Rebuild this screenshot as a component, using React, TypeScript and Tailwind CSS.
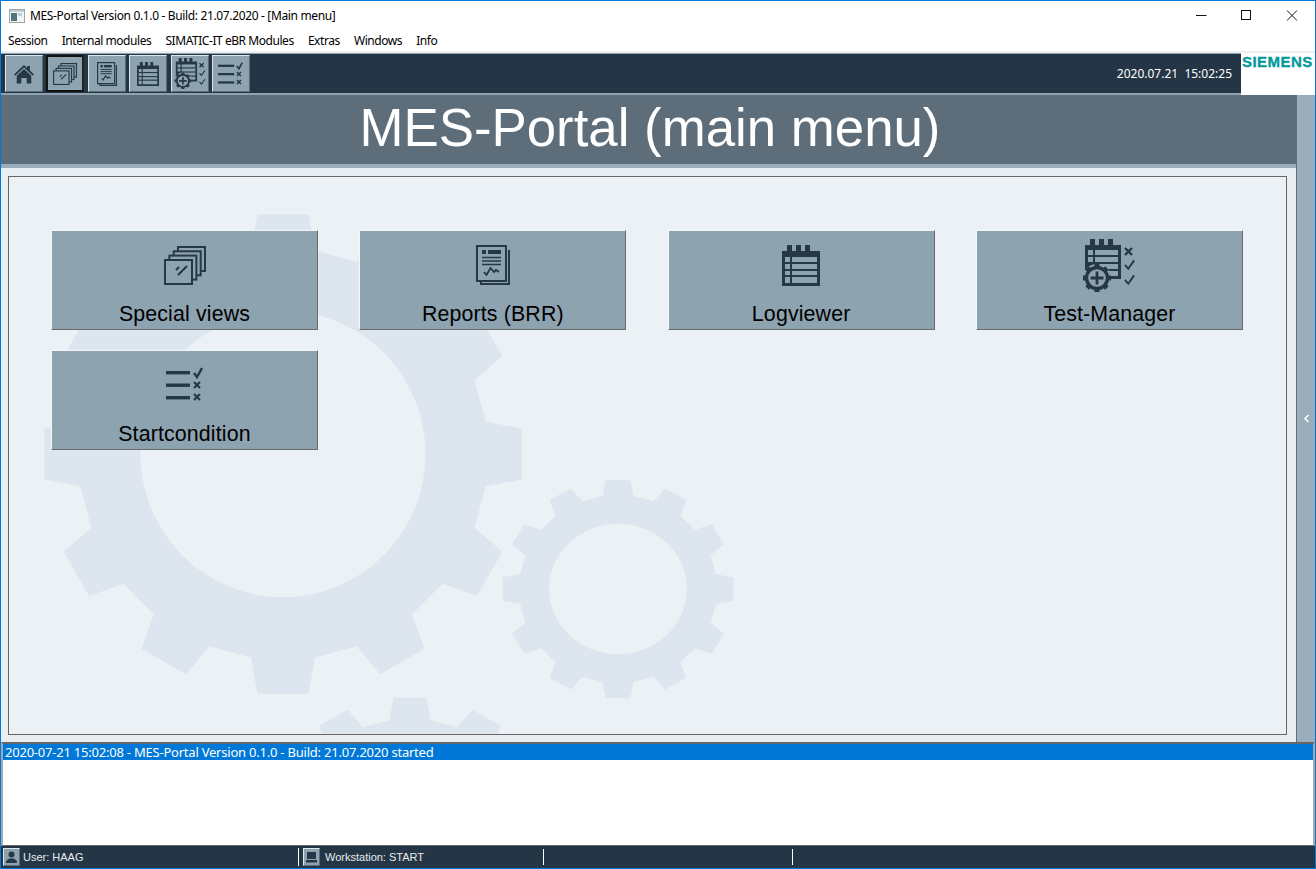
import type { ReactNode } from "react";

const ink = "#263746";
const tile = "#8ea3b0";

// unit gear, 12 teeth, one pointing up
function gearPath() {
    const pts: string[] = [];
    const rad = (d: number) => ((d - 90) * Math.PI) / 180;
    for (let i = 0; i < 12; i++) {
        const a = i * 30;
        const list: [number, number][] = [
            [a - 9, 0.855],
            [a - 6.1, 1],
            [a + 6.1, 1],
            [a + 9, 0.855],
        ];
        for (const [d, r] of list) {
            pts.push(`${(Math.cos(rad(d)) * r).toFixed(4)} ${(Math.sin(rad(d)) * r).toFixed(4)}`);
        }
    }
    const hole = 0.594;
    return `M${pts.join("L")}ZM${hole} 0A${hole} ${hole} 0 1 0 -${hole} 0A${hole} ${hole} 0 1 0 ${hole} 0Z`;
}

const gear = gearPath();

function Watermark() {
    return (
        <svg className="absolute left-[-9px] top-[-177px]" width="1316" height="869" viewBox="0 0 1316 869">
            <g fill="#dde5ee" fillRule="evenodd">
                <path d={gear} transform="translate(283 454) scale(240 241)" />
                <path d={gear} transform="translate(618 589) scale(116 110)" />
                <path d={gear} transform="translate(410 847) scale(154 150)" />
            </g>
        </svg>
    );
}

type IconProps = { w: number; h: number };

function Check({ x, y, s = 1 }: { x: number; y: number; s?: number }) {
    return <path d={`M${x} ${y + 3 * s}l${2.5 * s} ${3 * s}l${4.5 * s} -${6.5 * s}`} fill="none" stroke={ink} strokeWidth="1.9" />;
}

function Cross({ x, y }: { x: number; y: number }) {
    return <path d={`M${x} ${y}l6 6M${x + 6} ${y}l-6 6`} fill="none" stroke={ink} strokeWidth="2.2" />;
}

function HomeIcon({ w, h }: IconProps) {
    return (
        <svg width={w} height={h} viewBox="0 0 24 22">
            <path d="M1 11.5 12 1l3.5 3.3V2.2h3v5L23 11.5l-1.3 1.4L12 3.8 2.3 12.9z" fill={ink} />
            <path d="M4 13 12 5.6 20 13v8.5h-5v-6H9v6H4z" fill={ink} />
        </svg>
    );
}

function ViewsIcon({ w, h }: IconProps) {
    return (
        <svg width={w} height={h} viewBox="0 0 42 39" preserveAspectRatio="none" fill={tile} stroke={ink} strokeWidth="2">
            <rect x="14" y="1" width="27" height="24" />
            <rect x="9.7" y="5.3" width="27" height="24" />
            <rect x="5.4" y="9.6" width="27" height="24" />
            <rect x="1" y="14" width="27" height="24" />
            <path d="M12 24l3-3M14 29l9-9" strokeWidth="2" fill="none" />
        </svg>
    );
}

function ReportIcon({ w, h }: IconProps) {
    return (
        <svg width={w} height={h} viewBox="0 0 34 40" preserveAspectRatio="none" fill="none" stroke={ink}>
            <path d="M33 5v34H5v-3" strokeWidth="2" />
            <rect x="1" y="1" width="29" height="35" strokeWidth="2" />
            <rect x="6" y="5" width="4" height="4" fill={ink} stroke="none" />
            <rect x="12" y="5" width="13" height="4" fill={ink} stroke="none" />
            <path d="M6 12.5h19M6 16h19M6 19.5h19" strokeWidth="1.6" />
            <path d="M8 27l2.5 3 4-7 3.5 4 2-2 3 2" strokeWidth="1.8" />
        </svg>
    );
}

function LogIcon({ w, h }: IconProps) {
    return (
        <svg width={w} height={h} viewBox="0 0 38 41" preserveAspectRatio="none">
            <path d="M0 6h5V0h5v6h4V0h5v6h4V0h5v6h10v35H0z" fill={ink} />
            <g fill={tile}>
                <rect x="3" y="12" width="5" height="5" />
                <rect x="10" y="12" width="25" height="5" />
                <rect x="3" y="19" width="5" height="5" />
                <rect x="10" y="19" width="25" height="5" />
                <rect x="3" y="26" width="5" height="4" />
                <rect x="10" y="26" width="25" height="4" />
                <rect x="3" y="32" width="5" height="6" />
                <rect x="10" y="32" width="25" height="6" />
            </g>
        </svg>
    );
}

function TestIcon({ w, h }: IconProps) {
    const teeth = [0, 45, 90, 135, 180, 225, 270, 315];
    return (
        <svg width={w} height={h} viewBox="0 0 54 53" preserveAspectRatio="none">
            <path d="M3 6h5V0h5v6h4V0h5v6h4V0h5v6h8v34H3z" fill={ink} />
            <g fill={tile}>
                <rect x="6" y="11" width="5" height="5" />
                <rect x="13" y="11" width="23" height="5" />
                <rect x="6" y="18" width="5" height="5" />
                <rect x="13" y="18" width="23" height="5" />
                <rect x="16" y="25" width="20" height="5" />
                <rect x="27" y="32" width="9" height="5" />
            </g>
            <path d="M43 9l7 7M50 9l-7 7" stroke={ink} strokeWidth="2.4" fill="none" />
            <Check x={43} y={22} s={1.3} />
            <Check x={43} y={37} s={1.3} />
            <circle cx="15" cy="39" r="14" fill={tile} />
            <g fill={ink}>
                {teeth.map((t) => (
                    <rect key={t} x="12.5" y="25" width="5" height="5" transform={`rotate(${t} 15 39)`} />
                ))}
            </g>
            <circle cx="15" cy="39" r="10.5" fill={tile} stroke={ink} strokeWidth="3.4" />
            <path d="M15 32.5v13M8.5 39h13" stroke={ink} strokeWidth="2.8" />
        </svg>
    );
}

function ListIcon({ w, h }: IconProps) {
    return (
        <svg width={w} height={h} viewBox="0 0 37 36" preserveAspectRatio="none">
            <g fill={ink}>
                <rect x="0" y="4" width="24" height="3.4" />
                <rect x="0" y="16.5" width="24" height="3.4" />
                <rect x="0" y="29" width="24" height="3.4" />
            </g>
            <path d="M28 6l3 4 5-9" fill="none" stroke={ink} strokeWidth="2.4" />
            <Cross x={28} y={15} />
            <Cross x={28} y={27} />
        </svg>
    );
}

function ToolButton({ active, children }: { active?: boolean; children: ReactNode }) {
    return (
        <div
            className={`flex h-[37px] w-[38px] items-center justify-center bg-[#8ea3b0] ${
                active
                    ? "border-2 border-t-[#111] border-l-[#111] border-r-[#222] border-b-[#111]"
                    : "border border-t-[#dfe6ea] border-l-[#dfe6ea] border-r-[#5f6b74] border-b-[#5f6b74]"
            }`}
        >
            {children}
        </div>
    );
}

function MenuTile({ label, icon }: { label: string; icon: ReactNode }) {
    return (
        <div className="flex h-[100px] flex-col items-center border border-t-[#f4f6f8] border-l-[#f4f6f8] border-r-[#6a6a6a] border-b-[#6a6a6a] bg-[#8ea3b0]">
            <div className="flex h-[68px] items-center justify-center">{icon}</div>
            <span className="text-[21.33px] leading-[30px] tracking-[0.15px] text-black">{label}</span>
        </div>
    );
}

function StatusIcon({ children }: { children: ReactNode }) {
    return (
        <div className="flex h-[18px] w-[17px] items-center justify-center border border-t-[#dfe6ea] border-l-[#dfe6ea] border-r-[#5f6b74] border-b-[#5f6b74] bg-[#8ea3b0]">
            {children}
        </div>
    );
}

export default function App() {
    const menus = ["Session", "Internal modules", "SIMATIC-IT eBR Modules", "Extras", "Windows", "Info"];
    const uiFont = { fontFamily: '"Noto Sans", sans-serif' };

    return (
        <div className="flex h-[869px] w-[1316px] flex-col overflow-hidden border border-[#0078d7] bg-white font-['Liberation_Sans',Arial,sans-serif]">
            {/* title bar */}
            <div className="flex h-[29px] shrink-0 items-center pl-[8px] text-[12px] text-black" style={uiFont}>
                <svg width="16" height="14" viewBox="0 0 16 14" className="mr-[5px]">
                    <rect x="0.5" y="0.5" width="15" height="13" fill="#f3f5f5" stroke="#9aa5a8" />
                    <rect x="1" y="1" width="14" height="2" fill="#c6ced1" />
                    <rect x="2" y="4" width="6" height="8" fill="#52727c" />
                    <rect x="9" y="4" width="4" height="3" fill="#bcd0d8" />
                </svg>
                <span className="tracking-[-0.35px]">MES-Portal Version 0.1.0 - Build: 21.07.2020 - [Main menu]</span>
                <div className="ml-auto flex items-center">
                    <svg width="119" height="12" viewBox="0 0 119 12" fill="none" stroke="#111">
                        <path d="M0 5.5h10.5" />
                        <rect x="45.5" y="0.5" width="9" height="9" />
                        <path d="M91 .5l10 10M101 .5l-10 10" />
                    </svg>
                </div>
            </div>

            {/* menu bar */}
            <div className="flex h-[21px] shrink-0 items-center gap-[14.2px] pl-[7px] text-[12px] text-black" style={uiFont}>
                {menus.map((m) => (
                    <span key={m} className="tracking-[-0.45px]">{m}</span>
                ))}
            </div>

            {/* toolbar */}
            <div className="flex h-[44px] shrink-0 border-t-2 border-[#eeeeee]">
                <div className="flex flex-1 items-center border-t border-b-2 border-t-[#8ea3b0] border-b-[#8ea3b0] bg-[#243646] pl-[4px]">
                    <div className="flex gap-[3.4px]">
                        <ToolButton><HomeIcon w={22} h={20} /></ToolButton>
                        <ToolButton active><ViewsIcon w={24} h={22} /></ToolButton>
                        <ToolButton><ReportIcon w={20} h={24} /></ToolButton>
                        <ToolButton><LogIcon w={22} h={24} /></ToolButton>
                        <ToolButton><TestIcon w={32} h={31} /></ToolButton>
                        <ToolButton><ListIcon w={25} h={24} /></ToolButton>
                    </div>
                    <span className="ml-auto pr-[9px] text-[12px] text-white" style={uiFont}>
                        2020.07.21&nbsp;&nbsp;15:02:25
                    </span>
                </div>
                <div className="w-[74px] bg-white pl-[1px] text-[15px] font-bold leading-[17px] tracking-[0.45px] text-[#009999] [-webkit-text-stroke:0.3px_#009999]">SIEMENS</div>
            </div>

            {/* main */}
            <div className="flex min-h-0 flex-1">
                <div className="flex min-w-0 flex-1 flex-col border-r border-[#5f7080]">
                    <div className="flex h-[69px] shrink-0 items-center justify-center bg-[#5d6e7a] pl-[3px] pb-[3px] text-[52.8px] leading-none text-white">
                        MES-Portal (main menu)
                    </div>
                    <div className="h-[4px] shrink-0 bg-[#9bacbb]" />
                    <div className="flex-1 bg-[#e9eef3] pl-[7px] pr-[9px] pt-[8px] pb-[7px]">
                        <div className="relative h-full overflow-hidden border border-[#666] bg-[#ecf1f5]">
                            <Watermark />
                            <div className="relative grid grid-cols-4 gap-x-[41.33px] gap-y-[20px] pt-[53px] pl-[42px] pr-[43px]">
                                <MenuTile label="Special views" icon={<ViewsIcon w={42} h={39} />} />
                                <MenuTile label="Reports (BRR)" icon={<ReportIcon w={34} h={40} />} />
                                <MenuTile label="Logviewer" icon={<LogIcon w={38} h={41} />} />
                                <MenuTile label="Test-Manager" icon={<TestIcon w={54} h={53} />} />
                                <MenuTile label="Startcondition" icon={<ListIcon w={37} h={36} />} />
                            </div>
                        </div>
                    </div>
                </div>
                <div className="flex w-[18px] shrink-0 items-center justify-center bg-[#9bacbb]">
                    <svg width="7" height="9" viewBox="0 0 7 9" fill="none" stroke="#fff" strokeWidth="1.6">
                        <path d="M5.5 1 2 4.5 5.5 8" />
                    </svg>
                </div>
            </div>

            {/* log */}
            <div className="h-[104px] shrink-0 border-t-2 border-b border-x-2 border-[#666] border-x-[#a8a8a8] bg-white text-[13px]" style={uiFont}>
                <div className="h-[16px] bg-[#0078d7] pl-[2px] leading-[16px] tracking-[-0.22px] text-white">
                    2020-07-21 15:02:08 - MES-Portal Version 0.1.0 - Build: 21.07.2020 started
                </div>
            </div>

            {/* status bar */}
            <div className="flex h-[22px] shrink-0 items-center bg-[#243646] text-[11px] text-[#e6ebef]">
                <div className="flex w-[297px] items-center gap-[3px] pl-[2px]">
                    <StatusIcon>
                        <svg width="11" height="12" viewBox="0 0 11 12" fill={ink}>
                            <circle cx="5.5" cy="3.5" r="3" />
                            <path d="M0 12c0-3 1.5-4.5 5.5-4.5S11 9 11 12z" />
                        </svg>
                    </StatusIcon>
                    <span>User: HAAG</span>
                </div>
                <div className="flex w-[245px] items-center gap-[5px] border-l border-white pl-[4px]">
                    <StatusIcon>
                        <svg width="11" height="11" viewBox="0 0 11 11" fill={ink}>
                            <rect x="1" y="0" width="9" height="7" />
                            <rect x="0" y="8" width="11" height="2.5" />
                        </svg>
                    </StatusIcon>
                    <span>Workstation: START</span>
                </div>
                <div className="h-[16px] w-[249px] border-l border-white" />
                <div className="h-[16px] border-l border-white" />
            </div>
        </div>
    );
}
